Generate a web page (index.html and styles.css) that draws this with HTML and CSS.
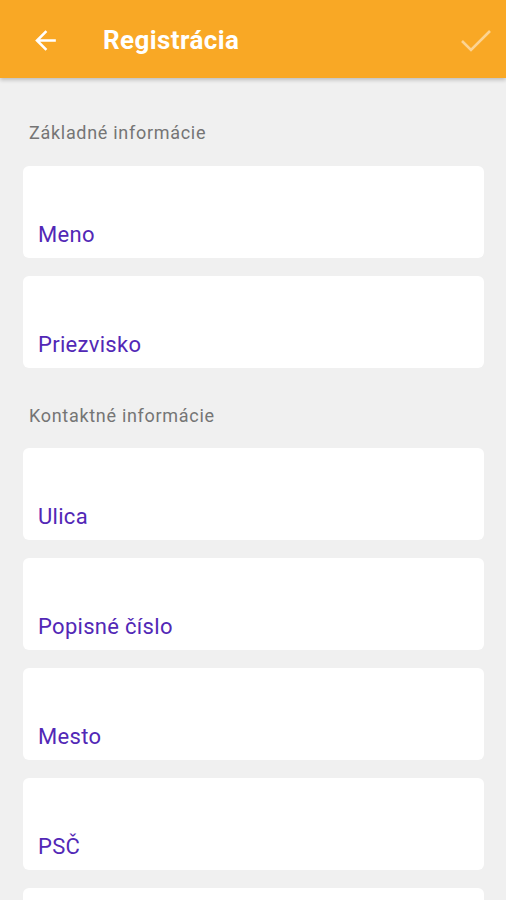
FILE: index.html
```html
<!DOCTYPE html>
<html lang="sk">
<head>
    <meta charset="UTF-8">
    <meta name="viewport" content="width=device-width, initial-scale=1.0">
    <title>Registrácia</title>
    <link rel="stylesheet" href="styles.css">
</head>
<body>
    <header class="lista">
        <button class="lista-ikona lista-spat" aria-label="Späť">
            <svg width="31" height="31" viewBox="0 0 24 24"><path fill="#fff" d="M20 11H7.83l5.59-5.59L12 4l-8 8 8 8 1.41-1.41L7.83 13H20v-2z"/></svg>
        </button>
        <h1 class="lista-nadpis">Registrácia</h1>
        <button class="lista-ikona lista-potvrdit" aria-label="Potvrdiť" disabled>
            <svg width="36" height="36" viewBox="0 0 36 36"><polyline points="4,18 13,27 32,8" fill="none" stroke="#fff" stroke-width="2.6"/></svg>
        </button>
    </header>

    <main class="obsah">
        <h2 class="sekcia">Základné informácie</h2>
        <label class="pole"><span class="pole-nazov">Meno</span></label>
        <label class="pole"><span class="pole-nazov">Priezvisko</span></label>

        <h2 class="sekcia sekcia-dalsia">Kontaktné informácie</h2>
        <label class="pole"><span class="pole-nazov">Ulica</span></label>
        <label class="pole"><span class="pole-nazov">Popisné číslo</span></label>
        <label class="pole"><span class="pole-nazov">Mesto</span></label>
        <label class="pole"><span class="pole-nazov">PSČ</span></label>
        <label class="pole"></label>
    </main>
</body>
</html>
```

FILE: styles.css
```css
body {
    margin: 0;
    background-color: #f0f0f0;
    font-family: Roboto, "Liberation Sans", sans-serif;
}

.lista {
    display: flex;
    align-items: center;
    height: 78px;
    padding: 0 12px 0 30px;
    background-color: #f9a825;
    box-shadow: 0 2px 4px rgba(0, 0, 0, 0.22);
    box-sizing: border-box;
}

.lista-ikona {
    display: flex;
    padding: 0;
    border: none;
    background: none;
}

.lista-spat {
    margin-top: 2px;
}

.lista-nadpis {
    flex: 1;
    margin: 2px 0 0 42px;
    font-size: 26px;
    font-weight: 700;
    letter-spacing: 0.4px;
    color: #fff;
}

.lista-potvrdit {
    opacity: 0.5;
    margin-top: 4px;
}

.obsah {
    padding: 45px 22px 0 23px;
}

.sekcia {
    margin: 0 0 23px 6px;
    font-size: 18px;
    line-height: 20px;
    font-weight: 400;
    letter-spacing: 0.7px;
    color: #757575;
}

.sekcia-dalsia {
    margin-top: 38px;
    margin-bottom: 22px;
}

.pole {
    display: flex;
    align-items: flex-end;
    height: 92px;
    margin-bottom: 18px;
    padding: 0 16px 11px 15px;
    background-color: #fff;
    border-radius: 6px;
    box-sizing: border-box;
}

.pole-nazov {
    font-size: 22px;
    line-height: 24px;
    letter-spacing: 0.3px;
    color: #5228b6;
}
```
